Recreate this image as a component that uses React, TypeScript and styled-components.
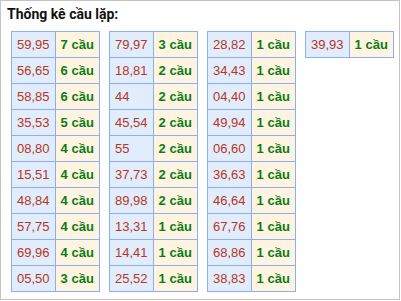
import React from "react";
import styled, { createGlobalStyle } from "styled-components";

const Global = createGlobalStyle`
  html, body { margin: 0; padding: 0; background: #fff; }
  body { font-family: "Liberation Sans", Arial, sans-serif; }
`;

const Box = styled.div`
  box-sizing: border-box;
  width: 400px;
  height: 300px;
  border: 1px solid #c4c4c4;
  padding: 4px 5px 0 6px;
  overflow: hidden;
`;

const Title = styled.h3`
  margin: 0;
  font-family: Roboto, "Liberation Sans", Arial, sans-serif;
  font-size: 14px;
  font-weight: bold;
  line-height: 18px;
  color: #111;
`;

const Tables = styled.div`
  display: flex;
  align-items: flex-start;
  gap: 9px;
  margin-top: 8px;
  padding-left: 4px;
`;

const Table = styled.table`
  border-collapse: collapse;
  font-size: 13px;
`;

const NumCell = styled.td`
  border: 1px solid #8cb0ee;
  background: #e1edfd;
  color: #b8361c;
  height: 25px;
  padding: 0 5px 0 5px;
  box-sizing: border-box;
  width: 44px;
  line-height: 25px;
  white-space: nowrap;
`;

const CountCell = styled.td`
  border: 1px solid #8cb0ee;
  background: #fff3e2;
  color: #0a7d12;
  font-weight: bold;
  height: 25px;
  padding: 0 5px;
  box-sizing: border-box;
  width: 45px;
  line-height: 25px;
  white-space: nowrap;
`;

const columns: [string, number][][] = [
  [
    ["59,95", 7], ["56,65", 6], ["58,85", 6], ["35,53", 5], ["08,80", 4],
    ["15,51", 4], ["48,84", 4], ["57,75", 4], ["69,96", 4], ["05,50", 3],
  ],
  [
    ["79,97", 3], ["18,81", 2], ["44", 2], ["45,54", 2], ["55", 2],
    ["37,73", 2], ["89,98", 2], ["13,31", 1], ["14,41", 1], ["25,52", 1],
  ],
  [
    ["28,82", 1], ["34,43", 1], ["04,40", 1], ["49,94", 1], ["06,60", 1],
    ["36,63", 1], ["46,64", 1], ["67,76", 1], ["68,86", 1], ["38,83", 1],
  ],
  [["39,93", 1]],
];

export default function App() {
  return (
    <>
      <Global />
      <Box>
        <Title>Thống kê cầu lặp:</Title>
        <Tables>
          {columns.map((col, i) => (
            <Table key={i}>
              <tbody>
                {col.map(([n, c]) => (
                  <tr key={n}>
                    <NumCell>{n}</NumCell>
                    <CountCell>{c} cầu</CountCell>
                  </tr>
                ))}
              </tbody>
            </Table>
          ))}
        </Tables>
      </Box>
    </>
  );
}
